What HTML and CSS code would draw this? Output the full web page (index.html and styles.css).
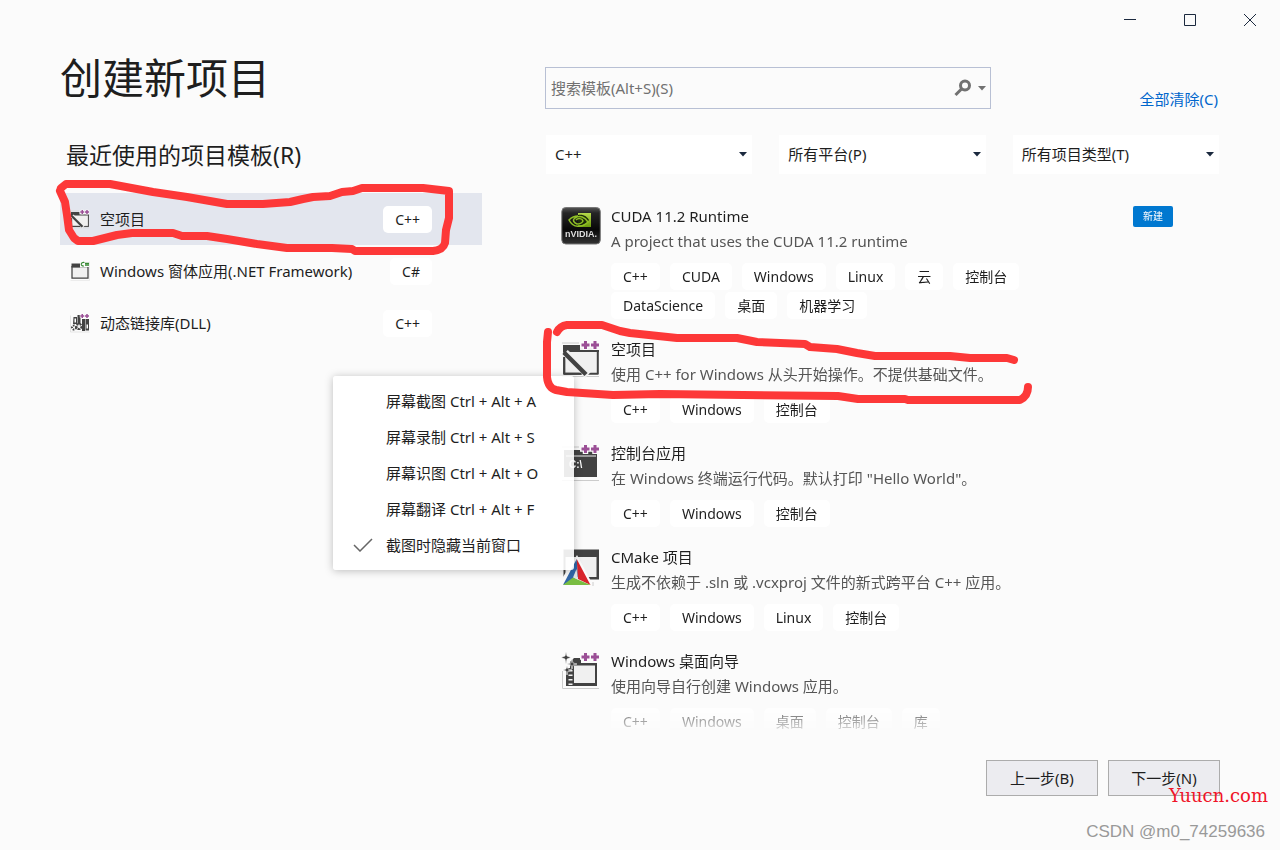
FILE: index.html
```html
<!DOCTYPE html>
<html lang="zh-CN">
<head>
<meta charset="utf-8">
<title>创建新项目</title>
<link rel="stylesheet" href="styles.css">
</head>
<body>
<svg class="defs" aria-hidden="true">
  <symbol id="plusplus" viewBox="0 0 20 10">
    <path d="M5.500 0v10M0 5h10M15 0v10M10 5h10" stroke="#fbfbfb" stroke-width="5.500" fill="none"/>
    <path d="M5.500 1v8M1.500 5h8M15 1v8M11 5h8" stroke="#9b4f96" stroke-width="3" fill="none"/>
  </symbol>
  <symbol id="blank" viewBox="0 0 40 40">
    <path d="M1 4h17M1 37.500h37" stroke="#ccc"/>
    <path d="M3 8h34v27H3z" fill="#f0f0f0"/>
    <path d="M2 6h17v5h19v2H2z" fill="#424242"/>
    <path d="M3.200 12v23M36.800 12v23M2.500 34.800h35" stroke="#424242" stroke-width="2" fill="none"/>
    <path d="M4 14l23 22" stroke="#f0f0f0" stroke-width="8"/>
    <path d="M3.200 18v17M2.500 34.800h18" stroke="#424242" stroke-width="2" fill="none"/>
    <path d="M3 13.500l22 22" stroke="#424242" stroke-width="4.500"/>
    <use href="#plusplus" x="19" y="1" width="20" height="10"/>
  </symbol>
  <symbol id="cmake" viewBox="0 0 40 40">
    <path d="M2.500 2.500h35.500v30H2.500z" fill="#424242"/>
    <path d="M4.500 10h31v20h-31z" fill="#f0f0f0"/>
    <path d="M16 8L33 40H0V33z" fill="#fbfbfb"/>
    <path d="M15.700 12L17 30 2 38z" fill="#3166a8"/>
    <path d="M15.700 12L29.500 38 17 32z" fill="#d8242c"/>
    <path d="M2 38l10-7.500L29.500 38z" fill="#79bd42"/>
    <path d="M15.500 22l-3.500 8.500L17 32.500z" fill="#e1e4e4"/>
    <path d="M32 35v4" stroke="#ccc"/>
  </symbol>
  <symbol id="wizard" viewBox="0 0 40 40">
    <path d="M1.500 20v17.500H38" stroke="#ccc" fill="none"/>
    <path d="M5 17h4v-6l4-4h7v5h16v23H5z" fill="#424242"/>
    <path d="M13 14.500H34V32H13z" fill="#f0f0f0"/>
    <path d="M9.500 19v15" stroke="#f0f0f0" stroke-width="4" stroke-dasharray="1.500 3"/>
    <path d="M5 1l1 4 4 1.500L6 8l-1 5-1-5-4-1.500L4 5zM11 8l1 4 4 1-4 1-1 4-1-4-4-1 4-1zM6 15l1 3 4 1-4 1-1 4-1-4-3-1 3-1z" fill="#424242" stroke="#fbfbfb" stroke-width=".6"/>
    <use href="#plusplus" x="19" y="1" width="20" height="10"/>
  </symbol>
  <symbol id="forms" viewBox="0 0 40 40">
    <path d="M4 11h32v23H4z" fill="#f0f0f0" stroke="#424242" stroke-width="2.500"/>
    <path d="M3 5h17v8H3z" fill="#424242"/>
    <path d="M20 0h20v12H20z" fill="#fbfbfb"/>
    <path d="M29 3c-8-2-9 8-1 7M32 3v7M36 3v7M30 5h8M30 8h8" fill="none" stroke="#388a34" stroke-width="2.200"/>
    <path d="M39 1v38H1" fill="none" stroke="#ddd"/>
  </symbol>
  <symbol id="dll" viewBox="0 0 40 40">
    <path d="M1 5v33h38" fill="none" stroke="#ccc"/>
    <path d="M7 8h7v14H6zM15 4h6v30h-6zM24 12h6v24h-6zM31 12h7v23h-7z" fill="#424242"/>
    <path d="M9 11h3v8H9zM33 23h3v8h-3z" fill="#fff"/>
    <circle cx="8" cy="29" r="4" fill="none" stroke="#424242" stroke-width="4" stroke-dasharray="3 2"/>
    <circle cx="18" cy="27" r="5" fill="#f0f0f0" stroke="#424242" stroke-width="4" stroke-dasharray="4 2"/>
    <use href="#plusplus" x="19" y="1" width="20" height="10"/>
  </symbol>
  <symbol id="arrow" viewBox="0 0 8 5"><path d="M0 0h8L4 4.500z" fill="currentColor"/></symbol>
</svg>

<div class="window">
  <header class="titlebar">
    <button class="caption" aria-label="最小化"><svg width="14" height="14" viewBox="0 0 14 14"><path d="M1 6.500h12"/></svg></button>
    <button class="caption" aria-label="最大化"><svg width="14" height="14" viewBox="0 0 14 14"><path d="M1.500 1.500h11v11h-11z"/></svg></button>
    <button class="caption" aria-label="关闭"><svg width="14" height="14" viewBox="0 0 14 14"><path d="M1 1l12 12M13 1L1 13"/></svg></button>
  </header>

  <main class="content">
    <section class="recent">
      <h1>创建新项目</h1>
      <h2>最近使用的项目模板(R)</h2>
      <ul class="recent-list">
        <li class="recent-item selected"><svg class="small-icon"><use href="#blank"/></svg><span class="recent-name">空项目</span><span class="tag">C++</span></li>
        <li class="recent-item"><svg class="small-icon"><use href="#forms"/></svg><span class="recent-name">Windows 窗体应用(.NET Framework)</span><span class="tag">C#</span></li>
        <li class="recent-item"><svg class="small-icon"><use href="#dll"/></svg><span class="recent-name">动态链接库(DLL)</span><span class="tag">C++</span></li>
      </ul>
    </section>

    <section class="templates">
      <div class="search-row">
        <div class="search">
          <input class="search-input" type="text" placeholder="搜索模板(Alt+S)(S)" aria-label="搜索模板">
          <svg class="magnifier" width="18" height="18" viewBox="0 0 18 18"><circle cx="11" cy="6.500" r="4.500"/><path d="M8 9.500L1.500 16"/></svg>
          <svg class="arrow"><use href="#arrow"/></svg>
        </div>
        <a class="clear" href="#">全部清除(C)</a>
      </div>
      <div class="filters">
        <div class="filter"><select class="filter-select" aria-label="语言"><option>C++</option></select><svg class="arrow"><use href="#arrow"/></svg></div>
        <div class="filter"><select class="filter-select" aria-label="平台"><option>所有平台(P)</option></select><svg class="arrow"><use href="#arrow"/></svg></div>
        <div class="filter"><select class="filter-select" aria-label="项目类型"><option>所有项目类型(T)</option></select><svg class="arrow"><use href="#arrow"/></svg></div>
      </div>
      <ul class="template-list">
        <li class="template">
          <svg class="icon" viewBox="0 0 40 40">
            <linearGradient id="gloss" x1="0" y1="0" x2="0" y2="1"><stop offset="0" stop-color="#555"/><stop offset=".15" stop-color="#252525"/><stop offset=".6" stop-color="#080808"/><stop offset="1" stop-color="#333"/></linearGradient>
            <linearGradient id="lime" x1="0" y1="0" x2="0" y2="1"><stop offset="0" stop-color="#b4d84a"/><stop offset="1" stop-color="#6b9a0c"/></linearGradient>
            <rect x=".8" y="1.500" width="38.500" height="36.500" rx="4" fill="url(#gloss)" stroke="#777"/>
            <path d="M17 7h13v14H17z" fill="url(#lime)"/>
            <path d="M17 9c6-1 9 2 11 5-3 4-7 6-11 5" fill="#1c2a0a"/>
            <path d="M17 10c-5 0-7 2-9 4 2 4 6 7 11 6 4 0 6-2 8-4-3-5-8-7-13-4-3 2-1 5 2 6 3 0 5-1 6-3-1-3-5-3-7-1" fill="none" stroke="#8fbf25" stroke-width="1.500"/>
            <text x="20" y="31" text-anchor="middle" class="nvidia-text">nVIDIA.</text>
          </svg>
          <div class="details">
            <h3>CUDA 11.2 Runtime</h3>
            <p>A project that uses the CUDA 11.2 runtime</p>
            <div class="tags"><span class="tag">C++</span><span class="tag">CUDA</span><span class="tag">Windows</span><span class="tag">Linux</span><span class="tag">云</span><span class="tag">控制台</span><span class="tag">DataScience</span><span class="tag">桌面</span><span class="tag">机器学习</span></div>
          </div>
          <span class="new">新建</span>
        </li>
        <li class="template">
          <svg class="icon"><use href="#blank"/></svg>
          <div class="details">
            <h3>空项目</h3>
            <p>使用 C++ for Windows 从头开始操作。不提供基础文件。</p>
            <div class="tags"><span class="tag">C++</span><span class="tag">Windows</span><span class="tag">控制台</span></div>
          </div>
        </li>
        <li class="template">
          <svg class="icon" viewBox="0 0 40 40">
            <path d="M1 4h17M1 37.500h37" stroke="#ccc"/>
            <path d="M3 7h33v27H3z" fill="#424242"/>
            <path d="M5 13h30" stroke="#f0f0f0"/>
            <text x="8" y="25" class="console-text">C:\</text>
            <use href="#plusplus" x="19" y="1" width="20" height="10"/>
          </svg>
          <div class="details">
            <h3>控制台应用</h3>
            <p>在 Windows 终端运行代码。默认打印 "Hello World"。</p>
            <div class="tags"><span class="tag">C++</span><span class="tag">Windows</span><span class="tag">控制台</span></div>
          </div>
        </li>
        <li class="template">
          <svg class="icon"><use href="#cmake"/></svg>
          <div class="details">
            <h3>CMake 项目</h3>
            <p>生成不依赖于 .sln 或 .vcxproj 文件的新式跨平台 C++ 应用。</p>
            <div class="tags"><span class="tag">C++</span><span class="tag">Windows</span><span class="tag">Linux</span><span class="tag">控制台</span></div>
          </div>
        </li>
        <li class="template">
          <svg class="icon"><use href="#wizard"/></svg>
          <div class="details">
            <h3>Windows 桌面向导</h3>
            <p>使用向导自行创建 Windows 应用。</p>
            <div class="tags"><span class="tag">C++</span><span class="tag">Windows</span><span class="tag">桌面</span><span class="tag">控制台</span><span class="tag">库</span></div>
          </div>
        </li>
      </ul>
    </section>
  </main>

  <footer class="actions">
    <button class="action">上一步(B)</button>
    <button class="action">下一步(N)</button>
  </footer>
</div>

<div class="menu" role="menu">
  <button class="menu-item" role="menuitem">屏幕截图 Ctrl + Alt + A</button>
  <button class="menu-item" role="menuitem">屏幕录制 Ctrl + Alt + S</button>
  <button class="menu-item" role="menuitem">屏幕识图 Ctrl + Alt + O</button>
  <button class="menu-item" role="menuitem">屏幕翻译 Ctrl + Alt + F</button>
  <button class="menu-item" role="menuitemcheckbox" aria-checked="true"><svg class="check" width="20" height="14" viewBox="0 0 20 14"><path d="M1 7l6 6L19 1"/></svg>截图时隐藏当前窗口</button>
</div>

<svg class="marks" width="1040" height="410" viewBox="0 0 1040 410" aria-hidden="true">
  <path d="M60 191L65 202 67 215 69 230 74 238 78 241H93L117 235 132 233H173L182 236H207L227 239 257 244 287 248H332L352 249 355 251H433Q443 250 445 243L446 230 449 218V191L423 188H362L353 191 342 192 330 196 313 197 303 199 290 202 263 204H227L187 197 153 192 110 184H66L61 188"/>
  <path d="M557 332Q560 326 567 325H602L620 331 630 333 677 338H737L757 342 805 344 810 347 837 349 857 353 875 356H950L970 358H1007L1014 360"/>
  <path d="M548 332L547 342V377Q548 388 556 390L567 392 613 395 660 394 838 396 858 399H905L908 400H1020Q1028 396 1028 387"/>
</svg>
<span class="site-mark">Yuucn.com</span>
<span class="author-mark">CSDN @m0_74259636</span>
</body>
</html>
```
FILE: styles.css
```css
* { box-sizing: border-box; }

body {
  margin: 0;
  background: #fbfbfb;
  color: #1e1e1e;
  font: 15px/25px "Noto Sans", "Noto Sans CJK SC", sans-serif;
}

h1, h2, h3, p, ul { margin: 0; padding: 0; font-weight: 400; }
ul { list-style: none; }
button, input, select { font: inherit; color: inherit; }

.defs { position: absolute; width: 0; height: 0; }
.console-text { font: bold 10px "Liberation Sans", sans-serif; fill: #fff; }
.nvidia-text { font: bold 9px "Liberation Sans", sans-serif; fill: #ddd; }

.window { display: flex; flex-direction: column; height: 100vh; }

.titlebar { display: flex; justify-content: flex-end; height: 40px; }
.caption {
  display: grid;
  place-items: center;
  width: 60px;
  padding: 0;
  border: 0;
  background: none;
}
.caption path { fill: none; stroke: #1b293e; }

.content {
  flex: 1;
  display: grid;
  grid-template-columns: 422fr 675fr;
  grid-template-rows: minmax(0, 1fr);
  gap: 63px;
  min-height: 0;
  padding: 0 60px;
}

.recent { padding-top: 8px; }
h1 { font-size: 42px; line-height: 60px; }
h2 { margin-top: 27px; padding-left: 6px; font-size: 23px; line-height: 40px; }
.recent-list { margin-top: 18px; }
.recent-item {
  display: flex;
  align-items: center;
  height: 52px;
  padding: 0 50px 0 10px;
}
.selected { background: #e3e6ee; }
.small-icon { width: 20px; height: 20px; }
.recent-name { flex: 1; padding-left: 10px; white-space: nowrap; }

.tag {
  padding: 0 12px;
  border-radius: 5px;
  background: #fff;
  font-size: 14px;
  line-height: 27px;
  white-space: nowrap;
}

.templates { display: flex; flex-direction: column; min-width: 0; padding-top: 27px; }
.search-row { display: flex; justify-content: space-between; align-items: center; }
.search {
  display: flex;
  align-items: center;
  gap: 6px;
  width: 66%;
  height: 42px;
  padding: 0 4px 0 5px;
  border: 1px solid #b8c0d4;
  color: #717171;
}
.search-input {
  flex: 1;
  min-width: 0;
  padding: 0;
  border: 0;
  outline: 0;
  background: none;
}
.search-input::placeholder { color: #717171; opacity: 1; }
.magnifier { fill: none; stroke: currentColor; stroke-width: 3; }
.arrow { width: 8px; height: 5px; }
.clear { padding: 22px 2px 0 0; color: #0066cc; line-height: 20px; text-decoration: none; }

.filters {
  display: grid;
  grid-template-columns: repeat(3, 1fr);
  gap: 27px;
  margin-top: 26px;
  padding: 0 1px;
}
.filter { display: grid; align-items: center; background: #fff; color: #1b293e; }
.filter > * { grid-area: 1 / 1; }
.filter .arrow { justify-self: end; margin-right: 5px; pointer-events: none; }
.filter-select {
  height: 39px;
  padding: 0 20px 0 9px;
  border: 0;
  appearance: none;
  background: none;
  color: #1e1e1e;
}

.template-list {
  flex: 1;
  min-height: 0;
  margin-top: 30px;
  padding-left: 16px;
  overflow: hidden;
  mask-image: linear-gradient(#000 calc(100% - 38px), transparent);
}
.template { display: flex; gap: 10px; padding-bottom: 18px; }
.icon { flex: none; width: 40px; height: 40px; margin-top: 2px; }
.details { flex: 0 1 420px; }
h3 { font-size: 15px; }
.details p { color: #555; }
.tags { display: flex; flex-wrap: wrap; gap: 2px 10px; margin-top: 9px; }
.new {
  align-self: flex-start;
  margin: 2px 47px 0 auto;
  padding: 0 10px;
  border-radius: 2px;
  background: #0078d0;
  color: #fff;
  font-size: 10px;
  line-height: 21px;
}

.actions { display: flex; justify-content: flex-end; gap: 10px; padding: 24px 60px 54px; }
.action {
  width: 112px;
  height: 36px;
  padding: 0;
  border: 1px solid #acacac;
  background: #ececf0;
}

.menu {
  position: absolute;
  left: 333px;
  top: 376px;
  width: 241px;
  padding: 7px 0;
  border-radius: 3px;
  background: rgba(255, 255, 255, .9);
  box-shadow: 0 1px 8px rgba(0, 0, 0, .25);
}
.menu-item {
  display: flex;
  align-items: center;
  width: 100%;
  height: 36px;
  padding: 0 0 0 53px;
  border: 0;
  background: none;
  white-space: nowrap;
}
.check { margin: 0 13px 0 -33px; fill: none; stroke: #666; stroke-width: 1.5; }

.marks {
  position: absolute;
  left: 0;
  top: 0;
  fill: none;
  stroke: #fd3838;
  stroke-width: 8;
  stroke-linecap: round;
  stroke-linejoin: round;
  pointer-events: none;
}
.site-mark {
  position: absolute;
  right: 12px;
  bottom: 42px;
  color: #f01428;
  font: 18px/24px "DejaVu Serif", serif;
}
.author-mark {
  position: absolute;
  right: 15px;
  bottom: 6px;
  color: #999;
  font: 17px/24px "Liberation Sans", sans-serif;
}
```
